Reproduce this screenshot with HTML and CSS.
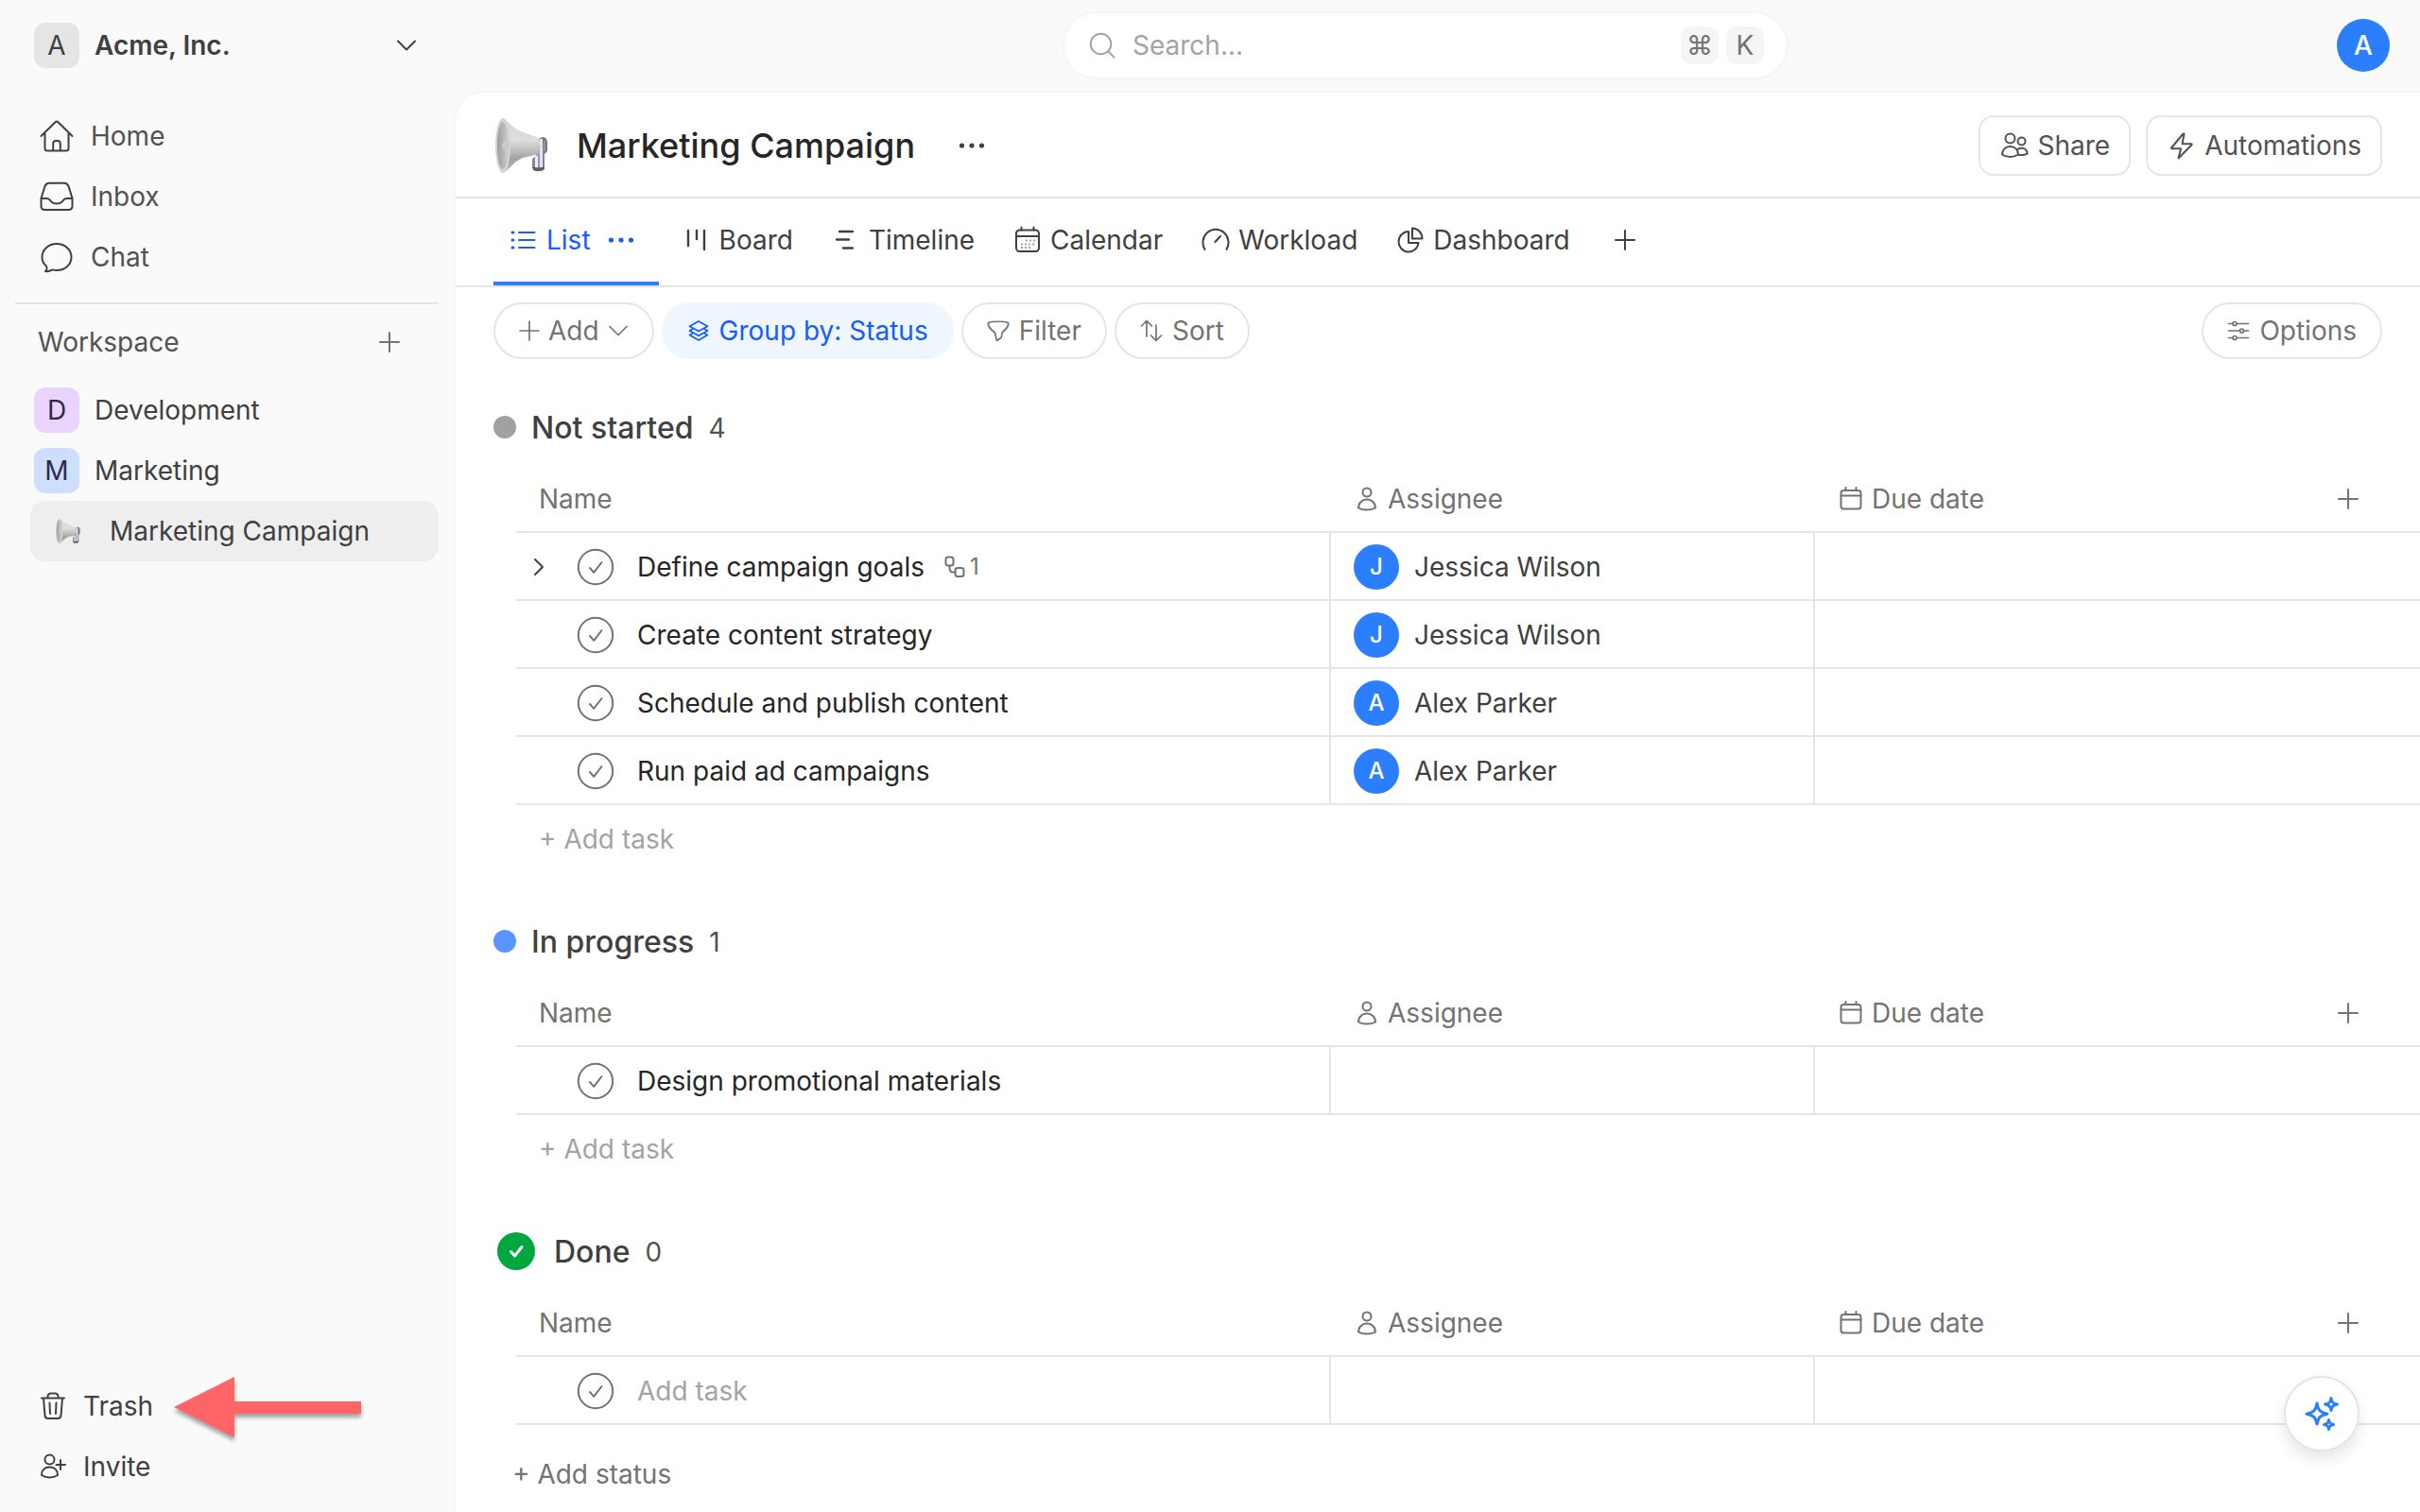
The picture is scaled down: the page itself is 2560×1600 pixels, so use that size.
FILE: index.html
```html
<!DOCTYPE html>
<html lang="en">
<head>
  <meta charset="UTF-8" />
  <meta name="viewport" content="width=device-width, initial-scale=1.0"/>
  <title>Marketing Campaign - Acme, Inc.</title>
  <link rel="stylesheet" href="styles.css">
</head>
<body>

  <!-- shared icons -->
  <svg class="sprite" aria-hidden="true">
    <defs>
      <linearGradient id="cone" x1="0" y1="0" x2="0" y2="1">
        <stop offset="0" stop-color="#d3d3d3"/>
        <stop offset="0.4" stop-color="#dededc"/>
        <stop offset="0.75" stop-color="#a2a2a2"/>
        <stop offset="1" stop-color="#c4c4c4"/>
      </linearGradient>
      <linearGradient id="bell" x1="0" y1="0" x2="1" y2="0">
        <stop offset="0" stop-color="#9c9c9c"/>
        <stop offset="1" stop-color="#cfcfcf"/>
      </linearGradient>
    </defs>
    <symbol id="i-megaphone" viewBox="0 0 60 64">
      <path d="M42 28 L52 23 Q57 23 57 29 V38 L54 41 L42 40Z" fill="#77777c"/>
      <path d="M43 30 H54 V54 Q54 59 48 59 Q41 59 41 54 V46 L45 43Z" fill="#85858a"/>
      <path d="M44 44 L47 42 V55 H44Z" fill="#f2f2f4"/>
      <path d="M49 25 H52 V55 H49Z" fill="#e4e5ec"/>
      <path d="M48 26 V54 M54 27 V38" stroke="#8f9bcb" stroke-width="1.500" fill="none"/>
      <path d="M41 54 Q48 58 54 54 V57 Q49 61 42 58Z" fill="#5f5f60"/>
      <path d="M10 3 C18 8 21 15 32 18 L48 24 Q51 33 48 41 L31 45 C22 48 18 57 10 61Z" fill="url(#cone)"/>
      <ellipse cx="10" cy="32" rx="8" ry="29" fill="#d4d4d2"/>
      <ellipse cx="10" cy="32" rx="6" ry="25" fill="url(#bell)"/>
      <ellipse cx="13" cy="32" rx="4" ry="5" fill="#c9c9c9"/>
    </symbol>
    <symbol id="i-plus" viewBox="0 0 24 24">
      <path d="M12 2V22M2 12H22"/>
    </symbol>
    <symbol id="i-dots" viewBox="0 0 28 28">
      <circle cx="3.500" cy="14" r="2.600"/><circle cx="14" cy="14" r="2.600"/><circle cx="24.500" cy="14" r="2.600"/>
    </symbol>
    <symbol id="i-check" viewBox="0 0 40 40">
      <circle cx="20" cy="20" r="18.200"/>
      <path d="M14 21L18.200 25.800L26.500 15"/>
    </symbol>
    <symbol id="i-person" viewBox="0 0 24 28">
      <circle cx="12" cy="7" r="4.500"/>
      <path d="M3 23.500C3 18 7 14.500 12 14.500S21 18 21 23.500C18.500 25 15.500 25.600 12 25.600S5.500 25 3 23.500Z"/>
    </symbol>
    <symbol id="i-date" viewBox="0 0 24 28">
      <rect x="1.500" y="5" width="21" height="19.500" rx="3"/>
      <path d="M1.500 10.500H22.500M6.500 2V5M17.500 2V5"/>
    </symbol>
  </svg>

  <div class="app">
    <aside class="sidebar">
      <button class="org">
        <span class="tile tile-org">A</span>
        <span class="org-name">Acme, Inc.</span>
        <svg class="icon" width="24" height="24" viewBox="0 0 24 24"><path d="M3 7.500L12 16.500L21 7.500"/></svg>
      </button>

      <nav class="main-nav">
        <a href="#">
          <svg class="icon" width="40" height="40" viewBox="0 0 40 40"><path d="M3.500 20L18.500 5.200Q20 3.800 21.500 5.200L36.500 20M7.500 17V33Q7.500 35.500 10 35.500H30Q32.500 35.500 32.500 33V17M16.200 35V28Q16.200 25 19 25H21Q23.800 25 23.800 28V35"/></svg>
          Home
        </a>
        <a href="#">
          <svg class="icon" width="40" height="40" viewBox="0 0 40 40"><path d="M3.500 22L7.500 9Q8.800 5.800 12 5.800H28Q31.200 5.800 32.500 9L36.500 22V30Q36.500 34 32.500 34H7.500Q3.500 34 3.500 30ZM3.500 22H9.500Q12 22 13.500 24.500Q15.500 27.500 20 27.500T26.500 24.500Q28 22 30.500 22H36.500"/></svg>
          Inbox
        </a>
        <a href="#">
          <svg class="icon" width="40" height="40" viewBox="0 0 40 40"><path d="M20 6C29 6 35.500 12.500 35.500 20C35.500 28 29 34 20 34C18.500 34 16.800 33.800 15.500 33.400C13 34.800 10 35.600 8 35C9.500 33.500 10.200 31 8.800 29.300C6 27 4.500 24 4.500 20C4.500 12.500 11 6 20 6Z"/></svg>
          Chat
        </a>
      </nav>

      <div class="workspace-head">
        <h2>Workspace</h2>
        <button aria-label="Add to workspace"><svg class="icon" width="24" height="24"><use href="#i-plus"/></svg></button>
      </div>

      <nav class="spaces">
        <a href="#"><span class="tile tile-dev">D</span>Development</a>
        <a href="#"><span class="tile tile-mkt">M</span>Marketing</a>
        <a href="#" class="project active"><svg width="28" height="30"><use href="#i-megaphone"/></svg>Marketing Campaign</a>
      </nav>

      <div class="sidebar-foot">
        <div class="foot-row">
          <a href="#">
            <svg class="icon" width="28" height="32" viewBox="0 0 28 32"><path d="M2 7.500H26M8.500 7.500V6Q8.500 2.500 12 2.500H16Q19.500 2.500 19.500 6V7.500M4 7.500L5.500 26Q6 29 9 29H19Q22 29 22.500 26L24 7.500M10.500 12.500L11 24M17.500 12.500L17 24"/></svg>
            Trash
          </a>
          <svg class="pointer" width="206" height="72" viewBox="0 0 206 72"><path d="M2 37L66 5V31H200V44H66V69Z"/></svg>
        </div>
        <div class="foot-row">
          <a href="#">
            <svg class="icon" width="28" height="32" viewBox="0 0 28 32"><circle cx="10.500" cy="8.500" r="5"/><path d="M2 25C2 19.500 5.500 16.500 10.500 16.500S19 19.500 19 25C16.500 26.700 14 27.400 10.500 27.400S4.500 26.700 2 25ZM22 9V19M17.500 14H27"/></svg>
            Invite
          </a>
        </div>
      </div>
    </aside>

    <div class="content">
      <header class="topbar">
        <div class="search">
          <svg class="icon" width="28" height="28" viewBox="0 0 28 28"><circle cx="12.500" cy="12.500" r="10.800"/><path d="M20.500 20.500L26.500 26.500"/></svg>
          <input type="text" placeholder="Search..." aria-label="Search">
          <kbd>⌘</kbd>
          <kbd>K</kbd>
        </div>
        <div class="account">
          <button class="avatar avatar-lg">A</button>
        </div>
      </header>

      <main class="panel">
        <div class="title-bar">
          <svg width="60" height="64"><use href="#i-megaphone"/></svg>
          <h1>Marketing Campaign</h1>
          <button class="more" aria-label="More"><svg class="dots" width="28" height="28"><use href="#i-dots"/></svg></button>
          <div class="actions">
            <button class="btn">
              <svg class="icon" width="32" height="32" viewBox="0 0 32 32"><circle cx="11.500" cy="8.500" r="5"/><circle cx="23.500" cy="11.500" r="4"/><path d="M3 25.500C3 20.500 6.500 17 11.500 17S20 20.500 20 25.500C17.500 27.200 15 28 11.500 28S5.500 27.200 3 25.500ZM18.500 20.500C19.800 19.300 21.500 18.700 23.500 18.700C27 18.700 29.500 21 29.500 24.700C27.500 25.900 24 26.300 20 25.900"/></svg>
              Share
            </button>
            <button class="btn">
              <svg class="icon" width="32" height="32" viewBox="0 0 32 32"><path d="M17.500 3.500L5 18.500Q4.600 19.200 5.500 19.200H15L12.500 29.500L26.500 15.200Q27 14.200 26 14.200H16.500L18.500 3.500"/></svg>
              Automations
            </button>
          </div>
        </div>

        <nav class="tabs">
          <div class="tab selected">
            <a href="#">
              <svg class="icon" width="32" height="32" viewBox="0 0 32 32"><path d="M11 8H27.500M11 16H27.500M11 24H27.500"/><path class="bullet" d="M4 8H5M4 16H5M4 24H5"/></svg>
              List
            </a>
            <button aria-label="List options"><svg class="dots" width="28" height="28"><use href="#i-dots"/></svg></button>
          </div>
          <a class="tab" href="#">
            <svg class="icon icon-md" width="32" height="32" viewBox="0 0 32 32"><path d="M7 6V22M16 6V15M24 6V26"/></svg>
            Board
          </a>
          <a class="tab" href="#">
            <svg class="icon icon-md" width="32" height="32" viewBox="0 0 32 32"><path d="M9 7H23M6 15.500H19M13 24.500H23"/></svg>
            Timeline
          </a>
          <a class="tab" href="#">
            <svg class="icon" width="32" height="32" viewBox="0 0 32 32"><rect x="4" y="5.500" width="24" height="22.500" rx="3.500"/><path d="M4 12H28M9.500 2.500V5.500M22.500 2.500V5.500"/><path class="days" d="M14 16.500H24M9 20.500H24M9 24H20"/></svg>
            Calendar
          </a>
          <a class="tab" href="#">
            <svg class="icon" width="32" height="32" viewBox="0 0 32 32"><path d="M4.500 26A13.500 14 0 1 1 27.500 26M15.500 18L21 12"/></svg>
            Workload
          </a>
          <a class="tab" href="#">
            <svg class="icon" width="32" height="32" viewBox="0 0 32 32"><path d="M14 7A10.500 10.800 0 1 0 24.500 19H14ZM18 3.500V14.500H28.500C28.500 8.500 24 3.500 18 3.500Z"/></svg>
            Dashboard
          </a>
          <button class="tab-add" aria-label="Add view"><svg class="icon" width="24" height="24"><use href="#i-plus"/></svg></button>
        </nav>

        <div class="toolbar">
          <button class="pill pill-add">
            <svg class="icon" width="24" height="24"><use href="#i-plus"/></svg>
            Add
            <svg class="icon" width="24" height="24" viewBox="0 0 24 24"><path d="M3 7.500L12 16.500L21 7.500"/></svg>
          </button>
          <button class="pill pill-on">
            <svg class="icon" width="24" height="24" viewBox="0 0 24 24"><path d="M12 2L21.500 7.200L12 12.500L2.500 7.200ZM5.500 10.300L2.500 12L12 17.300L21.500 12L18.500 10.300M5.500 14.900L2.500 16.600L12 22L21.500 16.600L18.500 14.900"/></svg>
            Group by: Status
          </button>
          <button class="pill">
            <svg class="icon" width="24" height="24" viewBox="0 0 24 24"><path d="M1.500 3.500C5 1.800 19 1.800 22.500 3.500C23.500 7.500 20 10.500 16.500 13.500C15.500 14.500 16 17.500 15 19.500L10.500 22.500C9.500 20 9 16 8.500 14C4 10.500 0.500 7.500 1.500 3.500Z"/></svg>
            Filter
          </button>
          <button class="pill">
            <svg class="icon" width="24" height="24" viewBox="0 0 24 24"><path d="M7 18V1.500M1.500 7L7 1.500L12.500 7M17 6V22.500M11.500 17L17 22.500L22.500 17"/></svg>
            Sort
          </button>
          <button class="pill pill-right">
            <svg class="icon" width="24" height="24" viewBox="0 0 24 24"><path d="M1.500 4.500H6M10 4.500H22.500M1.500 12H13.500M17.500 12H22.500M1.500 19.500H6M10 19.500H22.500"/><circle cx="8" cy="4.500" r="2"/><circle cx="15.500" cy="12" r="2"/><circle cx="8" cy="19.500" r="2"/></svg>
            Options
          </button>
        </div>

        <section class="group">
          <div class="group-head">
            <span class="status-dot gray"></span>
            <h3>Not started</h3>
            <span class="count">4</span>
          </div>
          <table class="tasks">
            <colgroup><col class="col-name"><col class="col-assignee"><col></colgroup>
            <thead>
              <tr>
                <th>Name</th>
                <th><div class="th"><svg class="icon" width="24" height="28"><use href="#i-person"/></svg>Assignee</div></th>
                <th>
                  <div class="th"><svg class="icon" width="24" height="28"><use href="#i-date"/></svg>Due date
                    <button class="add-col" aria-label="Add column"><svg class="icon" width="24" height="24"><use href="#i-plus"/></svg></button>
                  </div>
                </th>
              </tr>
            </thead>
            <tbody>
              <tr>
                <td>
                  <div class="task">
                    <button class="expand" aria-label="Show subtasks"><svg class="icon" width="24" height="24" viewBox="0 0 24 24"><path d="M8 4L16 12L8 20"/></svg></button>
                    <button class="check" aria-label="Complete"><svg class="icon" width="40" height="40"><use href="#i-check"/></svg></button>
                    Define campaign goals
                    <span class="subtasks"><svg class="icon" width="24" height="24" viewBox="0 0 24 24"><rect x="2.500" y="1.500" width="8" height="9" rx="2.500"/><rect x="12.500" y="13" width="9" height="9" rx="2.500"/><path d="M6.500 10.500V13Q6.500 17.500 10.500 17.500H12.500"/></svg>1</span>
                  </div>
                </td>
                <td><div class="person"><span class="avatar">J</span>Jessica Wilson</div></td>
                <td></td>
              </tr>
              <tr>
                <td>
                  <div class="task">
                    <button class="check" aria-label="Complete"><svg class="icon" width="40" height="40"><use href="#i-check"/></svg></button>
                    Create content strategy
                  </div>
                </td>
                <td><div class="person"><span class="avatar">J</span>Jessica Wilson</div></td>
                <td></td>
              </tr>
              <tr>
                <td>
                  <div class="task">
                    <button class="check" aria-label="Complete"><svg class="icon" width="40" height="40"><use href="#i-check"/></svg></button>
                    Schedule and publish content
                  </div>
                </td>
                <td><div class="person"><span class="avatar">A</span>Alex Parker</div></td>
                <td></td>
              </tr>
              <tr>
                <td>
                  <div class="task">
                    <button class="check" aria-label="Complete"><svg class="icon" width="40" height="40"><use href="#i-check"/></svg></button>
                    Run paid ad campaigns
                  </div>
                </td>
                <td><div class="person"><span class="avatar">A</span>Alex Parker</div></td>
                <td></td>
              </tr>
            </tbody>
          </table>
          <button class="add-task">+ Add task</button>
        </section>

        <section class="group">
          <div class="group-head">
            <span class="status-dot blue"></span>
            <h3>In progress</h3>
            <span class="count">1</span>
          </div>
          <table class="tasks">
            <colgroup><col class="col-name"><col class="col-assignee"><col></colgroup>
            <thead>
              <tr>
                <th>Name</th>
                <th><div class="th"><svg class="icon" width="24" height="28"><use href="#i-person"/></svg>Assignee</div></th>
                <th>
                  <div class="th"><svg class="icon" width="24" height="28"><use href="#i-date"/></svg>Due date
                    <button class="add-col" aria-label="Add column"><svg class="icon" width="24" height="24"><use href="#i-plus"/></svg></button>
                  </div>
                </th>
              </tr>
            </thead>
            <tbody>
              <tr>
                <td>
                  <div class="task">
                    <button class="check" aria-label="Complete"><svg class="icon" width="40" height="40"><use href="#i-check"/></svg></button>
                    Design promotional materials
                  </div>
                </td>
                <td></td>
                <td></td>
              </tr>
            </tbody>
          </table>
          <button class="add-task">+ Add task</button>
        </section>

        <section class="group">
          <div class="group-head done">
            <span class="status-done"><svg width="40" height="40" viewBox="0 0 40 40"><path d="M14.500 20.500L18.500 25L26 15.500"/></svg></span>
            <h3>Done</h3>
            <span class="count">0</span>
          </div>
          <table class="tasks">
            <colgroup><col class="col-name"><col class="col-assignee"><col></colgroup>
            <thead>
              <tr>
                <th>Name</th>
                <th><div class="th"><svg class="icon" width="24" height="28"><use href="#i-person"/></svg>Assignee</div></th>
                <th>
                  <div class="th"><svg class="icon" width="24" height="28"><use href="#i-date"/></svg>Due date
                    <button class="add-col" aria-label="Add column"><svg class="icon" width="24" height="24"><use href="#i-plus"/></svg></button>
                  </div>
                </th>
              </tr>
            </thead>
            <tbody>
              <tr>
                <td>
                  <div class="task">
                    <button class="check" aria-label="Complete"><svg class="icon" width="40" height="40"><use href="#i-check"/></svg></button>
                    <input type="text" placeholder="Add task" aria-label="Add task">
                  </div>
                </td>
                <td></td>
                <td></td>
              </tr>
            </tbody>
          </table>
        </section>

        <button class="add-status">+ Add status</button>
      </main>
    </div>
  </div>

  <button class="assistant" aria-label="Assistant">
    <svg width="40" height="40" viewBox="0 0 40 40">
      <path d="M15 9C16 16 18.500 19 26 20.200C18.500 21.500 16 24.500 15 31C14 24.500 11.500 21.500 4 20.200C11.500 19 14 16 15 9Z"/>
      <path d="M30 3.500C30.500 8 32 9.500 36.500 10C32 10.500 30.500 12.500 30 16.500C29.500 12.500 28 10.500 23.500 10C28 9.500 29.500 8 30 3.500Z"/>
      <path d="M27.500 26.500C28 30 29 31 32.500 31.500C29 32 28 33 27.500 36.500C27 33 26 32 22.500 31.500C26 31 27 30 27.500 26.500Z"/>
    </svg>
  </button>

</body>
</html>
```
FILE: styles.css
```css
* {
  box-sizing: border-box;
}

html, body {
  margin: 0;
  height: 100%;
}

body {
  font-family: Inter, 'Liberation Sans', sans-serif;
  font-size: 28px;
  line-height: 40px;
  color: #404040;
  background: #fafafa;
}

button, input {
  font: inherit;
  color: inherit;
  background: none;
  border: none;
  padding: 0;
  margin: 0;
}

button {
  display: flex;
  align-items: center;
  justify-content: center;
  cursor: pointer;
  white-space: nowrap;
}

a {
  color: inherit;
  text-decoration: none;
  white-space: nowrap;
}

h1, h2, h3 {
  margin: 0;
}

svg {
  display: block;
  flex-shrink: 0;
}

.sprite {
  position: absolute;
  width: 0;
  height: 0;
}

.icon {
  fill: none;
  stroke: currentColor;
  stroke-width: 2;
  stroke-linecap: round;
  stroke-linejoin: round;
}

.icon-md {
  stroke-width: 2.4;
}

.dots {
  fill: currentColor;
}

.app {
  display: flex;
  min-height: 100%;
}

/* sidebar */
.sidebar {
  width: 480px;
  flex-shrink: 0;
  display: flex;
  flex-direction: column;
  padding: 0 16px 16px;
}

.org {
  height: 96px;
  gap: 16px;
  padding: 0 22px 0 20px;
}

.org-name {
  flex: 1;
  text-align: left;
  font-weight: 600;
}

.tile {
  width: 48px;
  height: 48px;
  border-radius: 12px;
  display: flex;
  align-items: center;
  justify-content: center;
}

.tile-org {
  background: #e5e5e5;
}

.tile-dev {
  background: #e9d4ff;
  color: #2e2a4a;
}

.tile-mkt {
  background: #cddeff;
  color: #2e2a4a;
}

.main-nav {
  padding: 16px 0;
  border-bottom: 2px solid #e5e5e5;
}

.main-nav a {
  height: 64px;
  display: flex;
  align-items: center;
  gap: 16px;
  padding-left: 24px;
  color: #525252;
}

.main-nav .icon {
  color: #404040;
}

.workspace-head {
  height: 80px;
  display: flex;
  align-items: center;
  justify-content: space-between;
  padding: 0 40px 0 24px;
  color: #525252;
}

.workspace-head h2 {
  font-size: 28px;
  font-weight: 400;
}

.workspace-head button {
  color: #737373;
}

.spaces a {
  height: 64px;
  display: flex;
  align-items: center;
  gap: 16px;
  padding-left: 20px;
}

.spaces .project {
  margin-left: 16px;
  padding-left: 26px;
  gap: 30px;
  border-radius: 16px;
}

.spaces .active {
  background: #eee;
}

.sidebar-foot {
  margin-top: auto;
}

.foot-row {
  height: 64px;
  display: flex;
  align-items: center;
  gap: 20px;
  padding-left: 26px;
}

.foot-row a {
  display: flex;
  align-items: center;
  gap: 18px;
}

.pointer {
  fill: #ff6467;
  filter: drop-shadow(0 4px 2px rgba(0, 0, 0, 0.35));
}

/* top bar */
.content {
  flex: 1;
  min-width: 0;
  display: flex;
  flex-direction: column;
}

.topbar {
  height: 96px;
  display: grid;
  grid-template-columns: 1fr minmax(0, 768px) 1fr;
  align-items: center;
  padding: 0 32px 0 8px;
}

.search {
  grid-column: 2;
  height: 72px;
  display: flex;
  align-items: center;
  gap: 8px;
  padding: 0 24px 0 26px;
  background: #fff;
  border: 2px solid #f5f5f5;
  border-radius: 36px;
  color: #a3a3a3;
}

.search input {
  flex: 1;
  min-width: 0;
  padding-left: 10px;
  outline: none;
}

input::placeholder {
  color: #a3a3a3;
  opacity: 1;
}

kbd {
  width: 40px;
  height: 40px;
  border-radius: 12px;
  background: #f5f5f5;
  color: #737373;
  font-family: inherit;
  text-align: center;
}

.account {
  display: flex;
  justify-content: flex-end;
}

.avatar {
  width: 48px;
  height: 48px;
  border-radius: 50%;
  background: #2b7fff;
  color: #fff;
  display: flex;
  align-items: center;
  justify-content: center;
  font-size: 24px;
  font-weight: 500;
}

.avatar-lg {
  width: 56px;
  height: 56px;
  font-size: 28px;
}

/* project panel */
.panel {
  flex: 1;
  background: #fff;
  border: 2px solid #f5f5f5;
  border-width: 2px 0 0 2px;
  border-top-left-radius: 32px;
}

.title-bar {
  height: 112px;
  display: flex;
  align-items: center;
  padding: 2px 40px 0;
  border-bottom: 2px solid #e5e5e5;
}

.title-bar h1 {
  margin-left: 28px;
  font-size: 36px;
  font-weight: 500;
  color: #262626;
  white-space: nowrap;
}

.more {
  width: 64px;
  height: 64px;
  margin-left: 28px;
}

.actions {
  margin-left: auto;
  display: flex;
  gap: 16px;
}

.btn {
  height: 64px;
  gap: 8px;
  padding: 0 20px;
  border: 2px solid #e5e5e5;
  border-radius: 16px;
  color: #525252;
}

.tabs {
  height: 94px;
  display: flex;
  gap: 8px;
  padding: 0 40px;
  border-bottom: 2px solid #e5e5e5;
}

.tab, .tab a {
  display: flex;
  align-items: center;
  gap: 8px;
}

.tab {
  padding: 0 16px 4px;
}

.tab.selected {
  padding-bottom: 0;
  color: #155dfc;
  border-bottom: 4px solid #2b7fff;
}

.tab.selected button {
  width: 48px;
}

.bullet {
  stroke-width: 3;
}

.days {
  stroke: #a3a3a3;
  stroke-linecap: butt;
  stroke-dasharray: 2 2;
}

.tab-add {
  width: 68px;
  padding-bottom: 4px;
}

.toolbar {
  display: flex;
  gap: 8px;
  padding: 16px 40px 0;
}

.pill {
  height: 60px;
  gap: 10px;
  padding: 0 25px;
  border: 2px solid #e5e5e5;
  border-radius: 30px;
  color: #737373;
}

.pill .icon {
  stroke-width: 1.7;
}

.pill-add {
  gap: 8px;
  padding: 0 24px;
}

.pill-on {
  background: #eff6ff;
  border-color: #eff6ff;
  color: #155dfc;
}

.pill-right {
  margin-left: auto;
}

/* task groups */
.group {
  margin-top: 32px;
}

.group-head {
  height: 80px;
  display: flex;
  align-items: center;
  gap: 16px;
  padding-left: 40px;
}

.group-head.done {
  padding-left: 44px;
}

.group-head h3 {
  padding-top: 2px;
  font-size: 32px;
  font-weight: 500;
}

.done h3 {
  margin-left: 4px;
}

.count {
  padding-top: 2px;
  color: #525252;
}

.status-dot {
  width: 24px;
  height: 24px;
  border-radius: 50%;
}

.gray {
  background: #a1a1a1;
}

.blue {
  background: #5896ff;
}

.status-done {
  border-radius: 50%;
  background: #00a63e;
}

.status-done path {
  fill: none;
  stroke: #fff;
  stroke-width: 3;
  stroke-linecap: round;
  stroke-linejoin: round;
}

.tasks {
  width: calc(100% - 64px);
  margin-left: 64px;
  table-layout: fixed;
  border-collapse: separate;
  border-spacing: 0;
}

.col-name {
  width: 862px;
}

.col-assignee {
  width: 512px;
}

.tasks th, .tasks td {
  height: 72px;
  padding: 2px 24px 0;
  border-bottom: 2px solid #e5e5e5;
}

.tasks th {
  text-align: left;
  font-weight: 400;
  color: #737373;
}

.tasks td:not(:last-child) {
  border-right: 2px solid #e5e5e5;
}

.th {
  display: flex;
  align-items: center;
  gap: 10px;
}

.tasks th + th {
  padding-left: 26px;
}

.add-col {
  margin-left: auto;
  width: 24px;
  margin-right: 40px;
}

.task {
  display: flex;
  align-items: center;
  color: #262626;
  padding-left: 40px;
  white-space: nowrap;
}

.task .check {
  margin-right: 24px;
  color: #737373;
}

.expand {
  width: 24px;
  margin-left: -52px;
  margin-right: 28px;
  color: #404040;
}

.task input {
  flex: 1;
  min-width: 0;
  outline: none;
}

.subtasks {
  display: flex;
  align-items: center;
  gap: 4px;
  margin-left: 20px;
  font-size: 24px;
  color: #737373;
}

.person {
  display: flex;
  align-items: center;
  gap: 16px;
}

.add-task {
  height: 72px;
  margin-left: 88px;
  color: #a3a3a3;
}

.add-status {
  height: 72px;
  margin: 16px 0 0 60px;
  color: #737373;
}

/* floating assistant button */
.assistant {
  position: fixed;
  right: 64px;
  bottom: 64px;
  width: 80px;
  height: 80px;
  border-radius: 50%;
  background: #fff;
  border: 2px solid #e5e5e5;
  box-shadow: 0 8px 16px rgba(0, 0, 0, 0.1);
}

.assistant path {
  fill: none;
  stroke: #2b7fff;
  stroke-width: 3;
  stroke-linejoin: round;
}
```
